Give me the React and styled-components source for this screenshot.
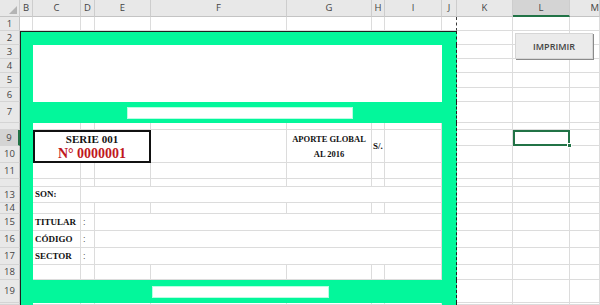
import React from "react";
import styled, { createGlobalStyle, css } from "styled-components";

const GREEN = "#03f79b";
const GRID = "#dcdcdc";
const FRAME = "#1e1e1e";
const EXCEL = "#217346";

const COLS = [
  ["B", 13], ["C", 48], ["D", 14], ["E", 56], ["F", 136], ["G", 85],
  ["H", 13], ["I", 57], ["J", 15], ["K", 56], ["L", 57], ["M", 30],
];
const ROW_HEIGHTS = [14, 14, 14, 14, 15, 14, 21, 7, 16, 17, 16, 8, 16, 11, 17, 17, 17, 15, 23, 2];

// column letter -> grid track (track 1 is the row header)
const col = (letter) => letter.charCodeAt(0) - 64;

// merged areas of the sheet; everything else is a plain cell
const BLOCKS = [
  { r: [2, 2], c: ["B", "J"], type: "band", top: true, left: true, right: true },
  { r: [3, 6], c: ["B", "B"], type: "band", left: true },
  { r: [3, 6], c: ["C", "I"], type: "panel" },
  { r: [3, 6], c: ["J", "J"], type: "band", right: true },
  { r: [7, 7], c: ["B", "J"], type: "band", left: true, right: true, slot: 224 },
  { r: [8, 18], c: ["B", "B"], type: "band", left: true },
  { r: [8, 18], c: ["J", "J"], type: "band", right: true },
  { r: [19, 19], c: ["B", "J"], type: "band", left: true, right: true, slot: 175 },
  { r: [20, 20], c: ["B", "B"], type: "band", left: true },
  { r: [20, 20], c: ["J", "J"], type: "band", right: true },
  { r: [9, 10], c: ["C", "E"], type: "serie" },
  { r: [9, 10], c: ["F", "F"], type: "cell" },
  { r: [9, 10], c: ["G", "G"], type: "aporte" },
  { r: [9, 10], c: ["H", "H"], type: "label", text: "S/.", pad: 1 },
  { r: [9, 10], c: ["I", "I"], type: "cell" },
  { r: [13, 13], c: ["C", "C"], type: "label", text: "SON:" },
  { r: [13, 13], c: ["D", "I"], type: "cell" },
  { r: [15, 15], c: ["C", "C"], type: "label", text: "TITULAR" },
  { r: [15, 15], c: ["D", "D"], type: "colon" },
  { r: [15, 15], c: ["E", "I"], type: "cell" },
  { r: [16, 16], c: ["C", "C"], type: "label", text: "CÓDIGO" },
  { r: [16, 16], c: ["D", "D"], type: "colon" },
  { r: [16, 16], c: ["E", "I"], type: "cell" },
  { r: [17, 17], c: ["C", "C"], type: "label", text: "SECTOR" },
  { r: [17, 17], c: ["D", "D"], type: "colon" },
  { r: [17, 17], c: ["E", "I"], type: "cell" },
];

const SELECTED = { r: 9, c: "L" };

const App = () => {
  const covered = new Set();
  BLOCKS.forEach((b) => {
    for (let r = b.r[0]; r <= b.r[1]; r++)
      for (let c = col(b.c[0]); c <= col(b.c[1]); c++) covered.add(`${r}-${c}`);
  });

  const plain = [];
  ROW_HEIGHTS.forEach((_, i) => {
    const r = i + 1;
    COLS.forEach(([letter]) => {
      if (covered.has(`${r}-${col(letter)}`)) return;
      const key = `${letter}${r}`;
      if (r === SELECTED.r && letter === SELECTED.c) {
        plain.push(<Selected key={key} $r={[r, r]} $c={[letter, letter]} />);
      } else {
        plain.push(
          <GridCell key={key} $r={[r, r]} $c={[letter, letter]} $pageBreak={letter === "J"} />
        );
      }
    });
  });

  const renderBlock = (b, i) => {
    const pos = { $r: b.r, $c: b.c };
    switch (b.type) {
      case "band":
        return (
          <Band key={i} {...pos} $top={b.top} $left={b.left} $right={b.right}>
            {b.slot && <Slot $w={b.slot} />}
          </Band>
        );
      case "panel":
        return <Panel key={i} {...pos} />;
      case "serie":
        return (
          <SerieBox key={i} {...pos}>
            <SerieTitle>SERIE 001</SerieTitle>
            <SerieNumber>N° 0000001</SerieNumber>
          </SerieBox>
        );
      case "aporte":
        return (
          <AporteCell key={i} {...pos}>
            <span>APORTE GLOBAL</span>
            <span>AL 2016</span>
          </AporteCell>
        );
      case "label":
        return (
          <LabelCell key={i} {...pos} $pad={b.pad}>
            {b.text}
          </LabelCell>
        );
      case "colon":
        return (
          <ColonCell key={i} {...pos}>
            :
          </ColonCell>
        );
      default:
        return <GridCell key={i} {...pos} />;
    }
  };

  return (
    <>
      <GlobalStyle />
      <Sheet>
        <Corner>
          <svg width="8" height="8" viewBox="0 0 8 8">
            <polygon points="8,0 8,8 0,8" fill="#b4b4b4" />
          </svg>
        </Corner>
        {COLS.map(([letter]) => (
          <ColHead key={letter} $col={col(letter)} $active={letter === SELECTED.c}>
            {letter}
          </ColHead>
        ))}
        {ROW_HEIGHTS.map((h, i) => (
          <RowHead key={i} $row={i + 2} $active={i + 1 === SELECTED.r}>
            {h > 9 ? i + 1 : ""}
          </RowHead>
        ))}
        {plain}
        {BLOCKS.map(renderBlock)}
        <PrintButton>IMPRIMIR</PrintButton>
      </Sheet>
    </>
  );
};

export default App;

const GlobalStyle = createGlobalStyle`
  html, body {
    margin: 0;
    padding: 0;
    background: #fff;
    overflow: hidden;
  }
  body {
    font-family: "Open Sans", "Liberation Sans", sans-serif;
  }
`;

const place = css`
  grid-column: ${(p) => col(p.$c[0])} / ${(p) => col(p.$c[1]) + 1};
  grid-row: ${(p) => p.$r[0] + 1} / ${(p) => p.$r[1] + 2};
  box-sizing: border-box;
  min-width: 0;
  min-height: 0;
`;

const Sheet = styled.div`
  display: grid;
  grid-template-columns: 20px ${COLS.map(([, w]) => `${w}px`).join(" ")};
  grid-template-rows: 17px ${ROW_HEIGHTS.map((h) => `${h}px`).join(" ")};
  width: 600px;
  height: 305px;
  overflow: hidden;
`;

const headBase = css`
  box-sizing: border-box;
  background: #e8e8e8;
  color: #444;
  font-size: 9.5px;
  line-height: 1;
  display: flex;
  align-items: center;
  justify-content: center;
  overflow: hidden;
`;

const Corner = styled.div`
  ${headBase};
  grid-column: 1;
  grid-row: 1;
  border-right: 1px solid #cdcdcd;
  border-bottom: 1px solid #c4c4c4;
  align-items: flex-end;
  justify-content: flex-end;
  padding: 0 2px 2px 0;
`;

const ColHead = styled.div`
  ${headBase};
  grid-column: ${(p) => p.$col};
  grid-row: 1;
  border-right: 1px solid #cdcdcd;
  border-bottom: ${(p) => (p.$active ? `2px solid ${EXCEL}` : "1px solid #c4c4c4")};
  background: ${(p) => (p.$active ? "#d4d4d4" : "#e8e8e8")};
  justify-content: ${(p) => (p.$col === 13 ? "flex-end" : "center")};
`;

const RowHead = styled.div`
  ${headBase};
  grid-column: 1;
  grid-row: ${(p) => p.$row};
  border-right: ${(p) => (p.$active ? `2px solid ${EXCEL}` : "1px solid #c4c4c4")};
  border-bottom: 1px solid #d4d4d4;
  background: ${(p) => (p.$active ? "#d4d4d4" : "#e8e8e8")};
`;

const GridCell = styled.div`
  ${place};
  background: #fff;
  border-right: 1px ${(p) => (p.$pageBreak ? "dashed #3a3a3a" : `solid ${GRID}`)};
  border-bottom: 1px solid ${GRID};
`;

const Selected = styled.div`
  ${place};
  position: relative;
  z-index: 2;
  border: 2px solid ${EXCEL};
  background: #fff;

  &::after {
    content: "";
    position: absolute;
    right: -4px;
    bottom: -4px;
    width: 5px;
    height: 5px;
    background: ${EXCEL};
    border: 1px solid #fff;
    box-sizing: border-box;
  }
`;

const Band = styled.div`
  ${place};
  background: ${GREEN};
  border-top: ${(p) => (p.$top ? `1px solid ${FRAME}` : "none")};
  border-left: ${(p) => (p.$left ? `1px solid ${FRAME}` : "none")};
  border-right: ${(p) => (p.$right ? `1px dashed ${FRAME}` : "none")};
  display: flex;
  align-items: center;
  justify-content: center;
  padding-left: 3px;
`;

const Slot = styled.div`
  width: ${(p) => p.$w}px;
  height: 10px;
  background: #fff;
  box-shadow: 0 0 0 1px rgba(230, 255, 245, 0.8);
`;

const Panel = styled.div`
  ${place};
  background: #fff;
`;

const serif = css`
  font-family: "Liberation Serif", "Times New Roman", serif;
  font-weight: 700;
  color: #111;
`;

const SerieBox = styled.div`
  ${place};
  ${serif};
  position: relative;
  z-index: 1;
  background: #fff;
  border: 2px solid #111;
  display: grid;
  grid-template-rows: 1fr 1fr;
  align-items: center;
  justify-items: center;
  line-height: 1;
`;

const SerieTitle = styled.div`
  font-size: 11px;
`;

const SerieNumber = styled.div`
  font-size: 14px;
  color: #c0171d;
`;

const AporteCell = styled(GridCell)`
  ${serif};
  font-size: 8.5px;
  line-height: 1;
  display: grid;
  grid-template-rows: 1fr 1fr;
  align-items: center;
  justify-items: center;
  padding-top: 1px;
`;

const LabelCell = styled(GridCell)`
  ${serif};
  font-size: 9px;
  line-height: 1;
  display: flex;
  align-items: center;
  padding-left: ${(p) => p.$pad ?? 2}px;
  white-space: nowrap;
  overflow: visible;
`;

const ColonCell = styled(GridCell)`
  font-family: "Liberation Sans", Arial, sans-serif;
  font-size: 9px;
  color: #555;
  display: flex;
  align-items: center;
  padding-left: 2px;
`;

const PrintButton = styled.div`
  grid-column: 12 / 14;
  grid-row: 3 / 5;
  justify-self: start;
  align-self: start;
  z-index: 3;
  margin: 2px 0 0 2px;
  width: 78px;
  height: 26px;
  box-sizing: border-box;
  background: #ebebeb;
  border: 1px solid #d6d6d6;
  box-shadow: 1px 1px 0 #8a8a8a;
  color: #444;
  font-family: "Open Sans", "Liberation Sans", sans-serif;
  font-size: 9px;
  font-weight: 600;
  display: flex;
  align-items: center;
  justify-content: center;
`;
